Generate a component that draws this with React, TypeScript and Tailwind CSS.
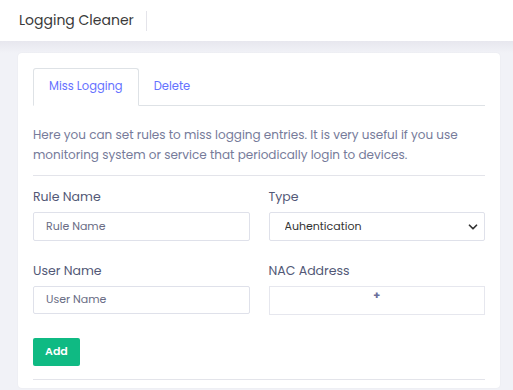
import { ChevronDown } from "lucide-react";

const font = { fontFamily: "Poppins, 'Open Sans', 'Liberation Sans', sans-serif" };

export default function App() {
  return (
    <div className="min-h-[390px] bg-[#f1f2f7] text-[#575b76]" style={font}>
      <header className="flex h-[41px] items-center bg-white px-[19px]">
        <h1 className="text-[14px] font-normal text-[#3a3a3a]">Logging Cleaner</h1>
        <span className="ml-[12px] h-[20px] w-px bg-[#e4e4ea]" />
      </header>
      <div className="h-[12px] bg-gradient-to-b from-[#e7e7ee] to-[#f1f2f7]" />

      <main className="ml-[18px] mr-[13px] rounded-[4px] bg-white px-[15px] pt-[15px] pb-2 shadow-[0_0_2px_rgba(0,0,0,0.06)]">
        <nav className="flex border-b border-[#dee2e6] text-[11.5px] text-[#6571ff]">
          <button className="-mb-px h-[38px] rounded-t-[3px] border border-b-white border-[#dee2e6] bg-white px-[15px]">Miss Logging</button>
          <button className="h-[37px] px-[15px]">Delete</button>
        </nav>

        <p className="mt-[19px] text-[12px] leading-[20px] text-[#767b9a]">
          Here you can set rules to miss logging entries. It is very useful if you use monitoring system or service that periodically login to devices.
        </p>

        <div className="mt-[10px] border-t border-[#e3e4ea] pt-[12px]">
          <div className="grid grid-cols-2 gap-x-[19px] gap-y-[21px]">
            <label className="block">
              <span className="block text-[12.5px] text-[#525876]">Rule Name</span>
              <input
                placeholder="Rule Name"
                className="mt-[5px] block h-[29px] w-full rounded-[2px] border border-[#dfe1ea] px-[12px] text-[11px] placeholder:text-[#6a6d85]"
              />
            </label>
            <label className="block">
              <span className="block text-[12.5px] text-[#525876]">Type</span>
              <div className="relative mt-[5px]">
                <select className="block h-[29px] w-full appearance-none rounded-[2px] border border-[#dfe1ea] bg-white px-[15px] text-[11px] text-[#333]">
                  <option>Auhentication</option>
                </select>
                <ChevronDown size={14} strokeWidth={3} className="pointer-events-none absolute right-[5px] top-[8px] text-[#333]" />
              </div>
            </label>
            <label className="block">
              <span className="block text-[12.5px] text-[#525876]">User Name</span>
              <input
                placeholder="User Name"
                className="mt-[5px] block h-[28px] w-full rounded-[2px] border border-[#dfe1ea] px-[12px] text-[11px] placeholder:text-[#6a6d85]"
              />
            </label>
            <label className="block">
              <span className="block text-[12.5px] text-[#525876]">NAC Address</span>
              <div className="mt-[5px] flex h-[29px] w-full justify-center border border-[#e6e7ee] pt-[3px] text-[11px] font-bold leading-none text-[#6b6f9a]">
                +
              </div>
            </label>
          </div>

          <button className="mt-[23px] h-[28px] rounded-[2px] bg-[#0fba83] px-[12px] text-[11px] font-semibold text-white">Add</button>
          <div className="mt-[13px] border-t border-[#e3e4ea]" />
        </div>
      </main>
    </div>
  );
}
